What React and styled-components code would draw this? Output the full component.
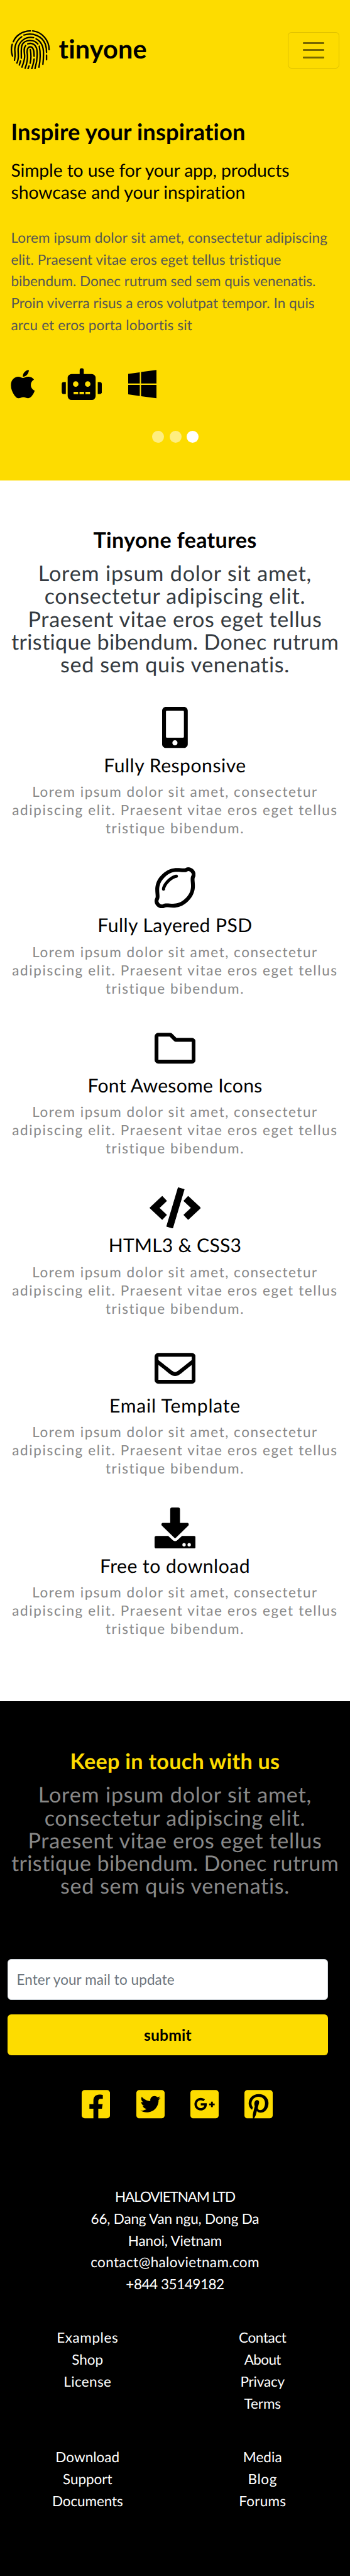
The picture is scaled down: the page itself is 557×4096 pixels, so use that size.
import React from "react";
import styled, { createGlobalStyle, css } from "styled-components";
import {
  FaApple,
  FaWindows,
  FaMobileAlt,
  FaRegLemon,
  FaRegFolder,
  FaRegEnvelope,
  FaFacebookSquare,
  FaTwitterSquare,
  FaGooglePlusSquare,
  FaPinterestSquare,
} from "react-icons/fa";

const SCALE = 0.7257;
const u = (n) => `${(n * SCALE).toFixed(2)}px`;

const YELLOW = "#fddc00";

const GlobalStyle = createGlobalStyle`
  *, *::before, *::after { box-sizing: border-box; }
  body {
    margin: 0;
    background: #000;
    font-family: Lato, "Open Sans", sans-serif;
    text-rendering: geometricPrecision;
    overflow-x: hidden;
  }
  h1, h2, h3, p, ul { margin: 0; padding: 0; font-weight: 400; }
  ul { list-style: none; }
`;

const Line = styled.span`
  display: block;
  white-space: nowrap;
  letter-spacing: ${(p) => p.$track || 0}em;
`;

const Lines = ({ rows }) =>
  rows.map(([text, track]) => (
    <Line key={text} $track={track}>
      {text}
    </Line>
  ));

/* ---------- hero ---------- */

const Hero = styled.header`
  background: ${YELLOW};
  height: ${u(1052.2)};
  padding: ${u(66)} ${u(24)} 0;
`;

const Navbar = styled.nav`
  display: flex;
  align-items: center;
  justify-content: space-between;
  height: ${u(86)};
`;

const Brand = styled.div`
  display: flex;
  align-items: center;
  gap: ${u(19)};
`;

const BrandMark = styled.svg`
  display: block;
  width: ${u(86)};
  height: ${u(86)};
  fill: none;
  stroke: #000;
  stroke-width: 9.5;
  stroke-linecap: round;
`;

const BrandName = styled.span`
  padding-bottom: ${u(6)};
  font-size: ${u(57)};
  line-height: ${u(80)};
  font-weight: 700;
  letter-spacing: 0.0042em;
`;

const Toggler = styled.button`
  display: flex;
  flex-direction: column;
  align-items: center;
  justify-content: center;
  gap: 8.6px;
  width: ${u(112)};
  height: ${u(80)};
  padding: 0;
  margin: ${u(2)} 0 0;
  background: transparent;
  border: ${u(2)} solid rgba(0, 0, 0, 0.13);
  border-radius: ${u(8)};
`;

const TogglerBar = styled.span`
  width: ${u(48)};
  height: 3px;
  border-radius: 1px;
  background: rgba(0, 0, 0, 0.53);
`;

const HeroTitle = styled.h1`
  margin-top: ${u(107.7)};
  font-size: ${u(50)};
  line-height: ${u(60)};
  font-weight: 700;
`;

const HeroSubtitle = styled.h2`
  margin-top: ${u(30.8)};
  font-size: ${u(39)};
  line-height: ${u(48)};
`;

const HeroText = styled.p`
  margin-top: ${u(50.6)};
  font-size: ${u(31)};
  line-height: ${u(48)};
  color: #555;
`;

const Platforms = styled.div`
  display: flex;
  gap: ${u(57.8)};
  margin-top: ${u(69.1)};
`;

const iconBox = css`
  display: block;
  flex: none;
  width: ${(p) => u(p.$w)};
  height: ${(p) => u(p.$h)};
`;

const IconSlot = styled.span`
  ${iconBox}
  svg {
    display: block;
    width: 100%;
    height: 100%;
  }
`;

const Dots = styled.div`
  display: flex;
  justify-content: center;
  gap: ${u(12)};
  margin-top: ${u(67)};
  padding-left: ${u(2)};
`;

const Dot = styled.span`
  width: ${u(26)};
  height: ${u(26)};
  border-radius: 50%;
  background: #fff;
  opacity: ${(p) => (p.$active ? 1 : 0.5)};
`;

/* ---------- shared section heading ---------- */

const SectionTitle = styled.h2`
  font-size: ${u(47)};
  line-height: ${u(58)};
  font-weight: 700;
  color: ${(p) => p.$color};
`;

const Lead = styled.p`
  margin-top: ${u(20)};
  font-size: ${u(47)};
  line-height: ${u(50)};
  color: ${(p) => p.$color};
`;

/* ---------- features ---------- */

const Features = styled.section`
  display: flex;
  flex-direction: column;
  align-items: center;
  height: ${u(2675.8)};
  padding-top: ${u(102)};
  background: #fff;
  text-align: center;
`;

const FeatureList = styled.div`
  display: flex;
  flex-direction: column;
  gap: ${u(65.7)};
  margin-top: ${u(67.2)};
`;

const Feature = styled.article`
  display: flex;
  flex-direction: column;
  align-items: center;
`;

const FeatureTitle = styled.h3`
  margin-top: ${u(12.5)};
  font-size: ${u(41.5)};
  line-height: ${u(50)};
`;

const FeatureText = styled.p`
  margin-top: ${u(12.6)};
  font-size: ${u(31)};
  line-height: ${u(40)};
  color: #888;
`;

/* ---------- footer ---------- */

const Footer = styled.footer`
  display: flex;
  flex-direction: column;
  align-items: center;
  height: ${u(1916)};
  padding-top: ${u(102.3)};
  background: #000;
  text-align: center;
`;

const Form = styled.form`
  align-self: stretch;
  display: flex;
  flex-direction: column;
  gap: ${u(32)};
  margin: ${u(133.4)} ${u(48)} 0 ${u(16)};
`;

const MailInput = styled.input`
  height: ${u(90)};
  padding: 0 ${u(18)} 0 ${u(19)};
  border: ${u(2)} solid #ced4da;
  border-radius: ${u(8)};
  background: #fff;
  font: 400 ${u(31)} Lato, sans-serif;
  letter-spacing: 0.0037em;
  &::placeholder {
    color: #6c757d;
    opacity: 1;
  }
`;

const SubmitButton = styled.button`
  height: ${u(90)};
  padding: 0;
  border: 0;
  border-radius: ${u(8)};
  background: ${YELLOW};
  color: #000;
  font: 700 ${u(34)} Lato, sans-serif;
  letter-spacing: 0.0074em;
`;

const Socials = styled.div`
  display: flex;
  gap: ${u(56.6)};
  margin-top: ${u(70.6)};
  padding-left: ${u(10)};
  color: ${YELLOW};
`;

const Address = styled.div`
  margin-top: ${u(144.5)};
  font-size: ${u(31)};
  line-height: ${u(48)};
  color: #fff;
`;

const LinkGrid = styled.div`
  align-self: stretch;
  display: grid;
  grid-template-columns: 1fr 1fr;
  row-gap: ${u(70.3)};
  margin-top: ${u(69)};
  font-size: ${u(31)};
  line-height: ${u(48)};
  color: #fff;
`;

const LinkColumn = styled.div``;

/* ---------- drawings ---------- */

const Fingerprint = () => (
  <BrandMark viewBox="24 18 258 258">
    <path d="M41 94C58 52 102 23 154 23" />
    <path d="M169 23C232 31 277 84 277 146" />
    <path d="M34 111C27 136 27 162 36 188" />
    <path d="M97 61C62 84 47 124 52 162C55 185 52 200 49 216" />
    <path d="M111 50C168 30 232 57 252 110C259 130 260 148 260 164" />
    <path d="M260 182V212" />
    <path d="M175 67C122 58 78 90 73 140C71 178 82 196 65 234" />
    <path d="M191 75C225 92 240 130 240 170C240 200 238 225 236 242" />
    <path d="M203 109C178 76 116 78 99 115C90 140 95 170 94 202" />
    <path d="M89 220L81 247" />
    <path d="M212 123C221 165 219 215 210 261" />
    <path d="M123 118C108 134 113 160 116 185C117 215 105 240 98 261" />
    <path d="M136 108C166 98 190 114 196 145C202 190 195 235 184 270" />
    <path d="M119 268C132 235 137 212 134 180C130 158 130 130 152 127C175 127 178 155 178 190" />
    <path d="M153 146C160 180 158 210 152 235" />
    <path d="M178 208C176 232 168 255 162 274" />
    <path d="M145 253L138 272" />
  </BrandMark>
);

const RobotIcon = () => (
  <svg viewBox="356 34 266.25 213">
    <rect x="475" y="36" width="27" height="52" rx="13" />
    <path
      fillRule="evenodd"
      d="M422 74H554A26 26 0 0 1 580 100V219A26 26 0 0 1 554 245H422A26 26 0 0 1 396 219V100A26 26 0 0 1 422 74ZM431 140a18 18 0 1 0 36 0a18 18 0 1 0 -36 0ZM510 140a18 18 0 1 0 36 0a18 18 0 1 0 -36 0ZM435 191h30v16h-30ZM474 191h30v16h-30ZM513 191h30v16h-30Z"
    />
    <path d="M384 127H371A14 14 0 0 0 357 141V192A14 14 0 0 0 371 206H384Z" />
    <path d="M594 127H607A14 14 0 0 1 621 141V192A14 14 0 0 1 607 206H594Z" />
  </svg>
);

const CodeIcon = () => (
  <svg viewBox="0 0 640 512" stroke="#000" strokeWidth="10" strokeLinejoin="round">
    <path d="M5 256L158 113L210 169L118 256L210 343L158 399Z" />
    <path d="M635 256L482 113L430 169L522 256L430 343L482 399Z" />
    <path d="M358 5L431 26L288 507L215 486Z" />
  </svg>
);

const DownloadIcon = () => (
  <svg viewBox="0 0 512 512">
    <path d="M219 0H293A24 24 0 0 1 317 24V193H404C424 193 433 209 422 225L265 378Q256 387 247 378L90 225C79 209 88 193 108 193H195V24A24 24 0 0 1 219 0Z" />
    <path
      fillRule="evenodd"
      d="M22 355H170L232 411Q256 428 280 411L342 355H490A22 22 0 0 1 512 377V490A22 22 0 0 1 490 512H22A22 22 0 0 1 0 490V377A22 22 0 0 1 22 355ZM347 465a21 21 0 1 0 42 0a21 21 0 1 0 -42 0ZM411 465a21 21 0 1 0 42 0a21 21 0 1 0 -42 0Z"
    />
  </svg>
);

/* ---------- content ---------- */

const LEAD_ROWS = [
  ["Lorem ipsum dolor sit amet,", 0.0241],
  ["consectetur adipiscing elit.", 0.0206],
  ["Praesent vitae eros eget tellus", 0.0192],
  ["tristique bibendum. Donec rutrum", 0.0107],
  ["sed sem quis venenatis.", 0.0184],
];

const HERO_ROWS = [
  ["Lorem ipsum dolor sit amet, consectetur adipiscing", 0.0053],
  ["elit. Praesent vitae eros eget tellus tristique", 0.0052],
  ["bibendum. Donec rutrum sed sem quis venenatis.", -0.0003],
  ["Proin viverra risus a eros volutpat tempor. In quis", 0.0026],
  ["arcu et eros porta lobortis sit", 0.0068],
];

const FEATURE_ROWS = [
  ["Lorem ipsum dolor sit amet, consectetur", 0.0676],
  ["adipiscing elit. Praesent vitae eros eget tellus", 0.0726],
  ["tristique bibendum.", 0.0688],
];

const FEATURES = [
  { title: "Fully Responsive", track: 0.017, w: 56.25, icon: <FaMobileAlt /> },
  { title: "Fully Layered PSD", track: 0.0153, w: 90, icon: <FaRegLemon /> },
  { title: "Font Awesome Icons", track: 0.0091, w: 90, icon: <FaRegFolder /> },
  { title: "HTML3 & CSS3", track: 0.0078, w: 112.5, icon: <CodeIcon /> },
  { title: "Email Template", track: 0.0265, w: 90, icon: <FaRegEnvelope /> },
  { title: "Free to download", track: 0.0161, w: 90, icon: <DownloadIcon /> },
];

const ADDRESS_ROWS = [
  ["HALOVIETNAM LTD", -0.0487],
  ["66, Dang Van ngu, Dong Da", -0.0087],
  ["Hanoi, Vietnam", -0.0067],
  ["contact@halovietnam.com", 0.0163],
  ["+844 35149182", -0.0208],
];

const LINK_COLUMNS = [
  [["Examples", 0.0255], ["Shop", 0.0008], ["License", 0.0159]],
  [["Contact", -0.0165], ["About", -0.0265], ["Privacy", -0.0079], ["Terms", -0.0022]],
  [["Download", 0.0012], ["Support", -0.0031], ["Documents", -0.0051]],
  [["Media", 0.0031], ["Blog", 0.0255], ["Forums", 0.0129]],
];

const SOCIALS = [FaFacebookSquare, FaTwitterSquare, FaGooglePlusSquare, FaPinterestSquare];

export default function App() {
  return (
    <>
      <GlobalStyle />
      <Hero>
        <Navbar>
          <Brand>
            <Fingerprint />
            <BrandName>tinyone</BrandName>
          </Brand>
          <Toggler aria-label="Toggle navigation">
            <TogglerBar />
            <TogglerBar />
            <TogglerBar />
          </Toggler>
        </Navbar>
        <HeroTitle>
          <Line $track={0.0044}>Inspire your inspiration</Line>
        </HeroTitle>
        <HeroSubtitle>
          <Line $track={-0.0039}>Simple to use for your app, products</Line>
          <Line $track={-0.0005}>showcase and your inspiration</Line>
        </HeroSubtitle>
        <HeroText>
          <Lines rows={HERO_ROWS} />
        </HeroText>
        <Platforms>
          <IconSlot $w={53.25} $h={71}><FaApple /></IconSlot>
          <IconSlot $w={88.75} $h={71}><RobotIcon /></IconSlot>
          <IconSlot $w={62.1} $h={71}><FaWindows /></IconSlot>
        </Platforms>
        <Dots>
          <Dot />
          <Dot />
          <Dot $active />
        </Dots>
      </Hero>

      <Features>
        <SectionTitle $color="#000">
          <Line $track={0.0093}>Tinyone features</Line>
        </SectionTitle>
        <Lead $color="#343a40">
          <Lines rows={LEAD_ROWS} />
        </Lead>
        <FeatureList>
          {FEATURES.map((f) => (
            <Feature key={f.title}>
              <IconSlot $w={f.w} $h={90}>{f.icon}</IconSlot>
              <FeatureTitle>
                <Line $track={f.track}>{f.title}</Line>
              </FeatureTitle>
              <FeatureText>
                <Lines rows={FEATURE_ROWS} />
              </FeatureText>
            </Feature>
          ))}
        </FeatureList>
      </Features>

      <Footer>
        <SectionTitle $color={YELLOW}>
          <Line $track={0.0087}>Keep in touch with us</Line>
        </SectionTitle>
        <Lead $color="#888">
          <Lines rows={LEAD_ROWS} />
        </Lead>
        <Form>
          <MailInput type="email" placeholder="Enter your mail to update" />
          <SubmitButton type="button">submit</SubmitButton>
        </Form>
        <Socials>
          {SOCIALS.map((Icon, i) => (
            <IconSlot key={i} $w={62.1} $h={71}><Icon /></IconSlot>
          ))}
        </Socials>
        <Address>
          <Lines rows={ADDRESS_ROWS} />
        </Address>
        <LinkGrid>
          {LINK_COLUMNS.map((rows) => (
            <LinkColumn key={rows[0][0]}>
              <Lines rows={rows} />
            </LinkColumn>
          ))}
        </LinkGrid>
      </Footer>
    </>
  );
}
